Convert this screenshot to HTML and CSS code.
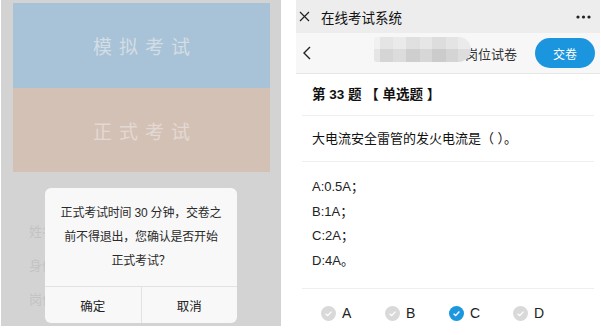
FILE: index.html
```html
<!DOCTYPE html>
<html lang="zh-CN">
<head>
  <meta charset="UTF-8" />
  <title>在线考试系统</title>
  <link rel="stylesheet" href="styles.css">
</head>
<body>
  <main class="shots">
    <!-- left: start screen with confirm dialog -->
    <section class="phone phone-left">
      <div class="entry entry-mock">模拟考试</div>
      <div class="entry entry-real">正式考试</div>
      <ul class="form">
        <li>姓名：</li>
        <li>身份证号：</li>
        <li>岗位：</li>
      </ul>

      <div class="dialog">
        <p class="dialog-text">正式考试时间 30 分钟，交卷之<br>前不得退出，您确认是否开始<br>正式考试？</p>
        <div class="dialog-btns">
          <button class="dlg-btn">确定</button>
          <button class="dlg-btn">取消</button>
        </div>
      </div>
    </section>

    <!-- right: question screen -->
    <section class="phone phone-right">
      <header class="topbar">
        <svg class="icon-close" width="11" height="11" viewBox="0 0 11 11">
          <path d="M1 1 L10 10 M10 1 L1 10" stroke="#222" stroke-width="1.2" fill="none"/>
        </svg>
        <span class="topbar-title">在线考试系统</span>
        <svg class="icon-more" width="15" height="4" viewBox="0 0 15 4">
          <circle cx="2" cy="2" r="1.6" fill="#222"/>
          <circle cx="7.5" cy="2" r="1.6" fill="#222"/>
          <circle cx="13" cy="2" r="1.6" fill="#222"/>
        </svg>
      </header>

      <div class="navbar">
        <svg class="icon-back" width="9" height="14" viewBox="0 0 9 14">
          <path d="M8 1 L2 7 L8 13" stroke="#222" stroke-width="1.4" fill="none"/>
        </svg>
        <div class="nav-title">
          <span class="nav-text">岗位试卷</span>
          <span class="mosaic"></span>
        </div>
        <button class="submit">交卷</button>
      </div>

      <div class="q-head">第 33 题 【 单选题 】</div>
      <div class="q-text">大电流安全雷管的发火电流是（ ）。</div>
      <ul class="options">
        <li>A:0.5A；</li>
        <li>B:1A；</li>
        <li>C:2A；</li>
        <li>D:4A。</li>
      </ul>

      <div class="answers">
        <label class="answer">
          <svg width="15" height="15" viewBox="0 0 15 15"><circle cx="7.5" cy="7.5" r="7.5" fill="#d9d9d9"/><path d="M4.6 7.7 L6.7 9.6 L10.4 5.6" stroke="#fff" stroke-width="1.3" fill="none"/></svg>
          <span>A</span>
        </label>
        <label class="answer">
          <svg width="15" height="15" viewBox="0 0 15 15"><circle cx="7.5" cy="7.5" r="7.5" fill="#d9d9d9"/><path d="M4.6 7.7 L6.7 9.6 L10.4 5.6" stroke="#fff" stroke-width="1.3" fill="none"/></svg>
          <span>B</span>
        </label>
        <label class="answer">
          <svg width="15" height="15" viewBox="0 0 15 15"><circle cx="7.5" cy="7.5" r="7.5" fill="#1a97df"/><path d="M4.6 7.7 L6.7 9.6 L10.4 5.6" stroke="#fff" stroke-width="1.4" fill="none"/></svg>
          <span>C</span>
        </label>
        <label class="answer">
          <svg width="15" height="15" viewBox="0 0 15 15"><circle cx="7.5" cy="7.5" r="7.5" fill="#d9d9d9"/><path d="M4.6 7.7 L6.7 9.6 L10.4 5.6" stroke="#fff" stroke-width="1.3" fill="none"/></svg>
          <span>D</span>
        </label>
      </div>
    </section>
  </main>
</body>
</html>
```

FILE: styles.css
```css
* {
  margin: 0;
  padding: 0;
  box-sizing: border-box;
}

body {
  background: #fff;
  font-family: "Liberation Sans", "Noto Sans CJK SC", sans-serif;
  color: #222;
}

ul {
  list-style: none;
}

button {
  font-family: inherit;
  border: 0;
  background: none;
}

.shots {
  display: flex;
  width: 601px;
  height: 335px;
}

.phone {
  height: 326px;
  position: relative;
  overflow: hidden;
}

/* left screen */
.phone-left {
  width: 280px;
  margin-left: 1px;
  background: #d3d3d3;
  padding: 3px 11px 0 12px;
}

.entry {
  display: flex;
  align-items: center;
  justify-content: center;
  font-size: 19px;
  letter-spacing: 7px;
  padding-left: 7px;
}

.entry-mock {
  height: 85px;
  background: #a8c3d7;
  color: #d3dde5;
}

.entry-real {
  height: 84px;
  background: #d4c1b6;
  color: #e3d9d3;
}

/* only the part left of the dialog shows */
.form {
  margin-top: 43px;
  margin-left: 16px;
  width: 16px;
  overflow: hidden;
  white-space: nowrap;
}

.form li {
  height: 34px;
  line-height: 34px;
  font-size: 13px;
  color: #c3c3c3;
}

.dialog {
  position: absolute;
  left: 44px;
  top: 188px;
  width: 192px;
  background: #f8f8f8;
  border-radius: 6px;
  overflow: hidden;
}

.dialog-text {
  padding: 13px 0;
  font-size: 12px;
  line-height: 24px;
  text-align: center;
  color: #2a2a2a;
  white-space: nowrap;
  letter-spacing: -0.2px;
}

.dialog-btns {
  display: flex;
  border-top: 1px solid #e2e2e2;
}

.dlg-btn {
  flex: 1;
  height: 36px;
  font-size: 12.5px;
  color: #222;
}

.dlg-btn + .dlg-btn {
  border-left: 1px solid #e2e2e2;
}

/* right screen */
.phone-right {
  width: 304px;
  margin-left: 15px;
  background: #fff;
}

.topbar {
  height: 33px;
  background: #ededed;
  display: flex;
  align-items: center;
  padding: 0 9px 0 3px;
}

.topbar-title {
  flex: 1;
  margin-left: 11px;
  font-size: 13.5px;
  color: #111;
}

.navbar {
  height: 41px;
  background: #f7f7f7;
  border-bottom: 1px solid #e6e6e6;
  display: flex;
  align-items: center;
  padding: 0 5px 0 6px;
}

.nav-title {
  flex: 1;
  display: flex;
  justify-content: flex-end;
  align-items: center;
  position: relative;
  font-size: 13px;
  color: #333;
}

/* blurred-out company name */
.mosaic {
  position: absolute;
  right: 46px;
  top: -7px;
  width: 97px;
  height: 25px;
  border-radius: 3px 13px 13px 3px;
  background:
    linear-gradient(180deg, rgba(255,255,255,0.25) 0 50%, rgba(0,0,0,0.03) 50% 100%),
    linear-gradient(90deg, #ececec 0 6%, #dcdcdc 6% 20%, #e3e3e3 20% 33%, #d5d5d5 33% 47%, #dedede 47% 60%, #d2d2d2 60% 74%, #dbdbdb 74% 87%, #e4e4e4 87% 100%);
}

.submit {
  width: 60px;
  height: 30px;
  margin-left: 18px;
  border-radius: 15px;
  background: #1b95dd;
  color: #fff;
  font-size: 12px;
}

.q-head,
.q-text,
.options {
  margin: 0 6px;
  padding-left: 10px;
  border-bottom: 1px solid #efefef;
}

.q-head {
  height: 42px;
  line-height: 41px;
  font-size: 13.5px;
  font-weight: bold;
  color: #111;
}

.q-text {
  height: 46px;
  line-height: 46px;
  font-size: 13px;
  color: #111;
}

.options {
  padding-top: 13px;
  padding-bottom: 15px;
}

.options li {
  line-height: 24.5px;
  font-size: 13px;
  color: #222;
}

.answers {
  height: 48px;
  display: flex;
  align-items: center;
  padding-left: 25px;
}

.answer {
  width: 64px;
  display: flex;
  align-items: center;
  gap: 6px;
  font-size: 14px;
  color: #222;
}
```
